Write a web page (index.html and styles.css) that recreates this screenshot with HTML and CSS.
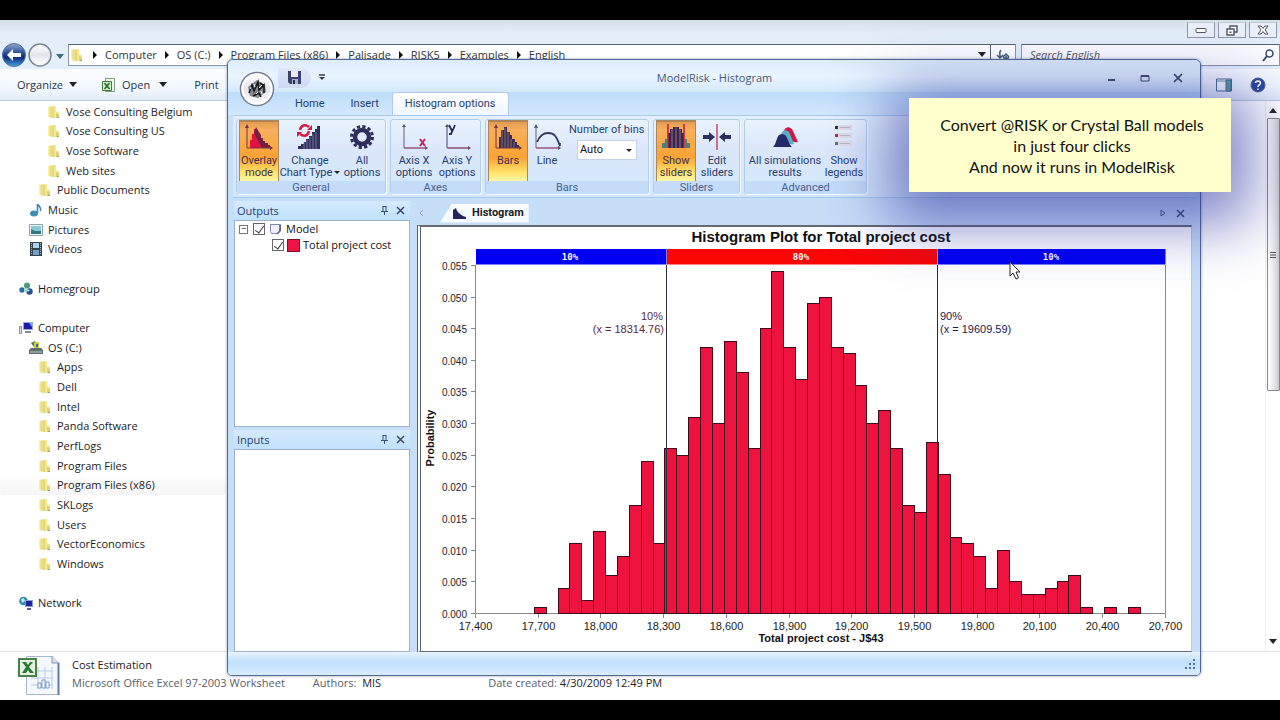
FILE: index.html
```html
<!DOCTYPE html>
<html lang="en">
<head>
<meta charset="utf-8">
<title>ModelRisk - Histogram</title>
<link rel="stylesheet" href="styles.css">
</head>
<body>
<svg class="defs" aria-hidden="true">
  <linearGradient id="gFolder" x1="0" x2="1"><stop offset="0" stop-color="#fbf6b4"/><stop offset=".55" stop-color="#e9d873"/><stop offset="1" stop-color="#f6efae"/></linearGradient>
  <linearGradient id="gOrb" x1="0" y1="0" x2="0" y2="1"><stop offset="0" stop-color="#fff"/><stop offset=".5" stop-color="#e4e4ee"/><stop offset="1" stop-color="#fff"/></linearGradient>
  <linearGradient id="gBack" x1="0" y1="0" x2="0" y2="1"><stop offset="0" stop-color="#8fa9d6"/><stop offset=".45" stop-color="#23468f"/><stop offset=".6" stop-color="#0d2a78"/><stop offset="1" stop-color="#3fa6ea"/></linearGradient>
  <symbol id="folder" viewBox="0 0 14 14"><path d="M1 2l5-1v12l-5-1z" fill="url(#gFolder)"/><path d="M5 1h4v5l3 1v6H5z" fill="#f3e894"/><path d="M6 2v11" stroke="#d6c663"/><path d="M9 8l3 1v4H9z" fill="#ddd07c"/><path d="M10 12h2v1h-2z" fill="#9aa27a"/></symbol>
  <symbol id="music" viewBox="0 0 14 14"><ellipse cx="5" cy="10.500" rx="4" ry="3" fill="#3f8fb4"/><path d="M8.500 10V1c1 2 4 3 3 7" fill="none" stroke="#3c87b6" stroke-width="1.600"/></symbol>
  <symbol id="pictures" viewBox="0 0 14 14"><path d="M.5 1.500h13v11H.5z" fill="#eef6fa" stroke="#8fa3ad"/><path d="M2 3h10v8H2z" fill="#8cc9d6"/><path d="M2 6l4 2 6 0v3H2z" fill="#2f7a80"/></symbol>
  <symbol id="videos" viewBox="0 0 14 14"><path d="M1 0h12v14H1z" fill="#34454f"/><path d="M4 1h6v5H4z" fill="#a8d3ee"/><path d="M4 8h6v5H4z" fill="#6fa1c9"/><path d="M2.500 1v12M11.500 1v12" stroke="#aab8c0" stroke-dasharray="1 1"/></symbol>
  <symbol id="homegroup" viewBox="0 0 14 14"><circle cx="3" cy="8" r="2.700" fill="#2c6aa0"/><circle cx="8" cy="3.500" r="3" fill="#4c9a7c"/><circle cx="10.500" cy="9.500" r="3.200" fill="#27508f"/><circle cx="7" cy="8" r="2" fill="#9fd9c8"/><circle cx="9.500" cy="8.500" r="1" fill="#cfe9f6"/></symbol>
  <symbol id="computer" viewBox="0 0 14 14"><path d="M.5 5.500h2v7h-2z" fill="#dde6ee" stroke="#7f90a2"/><path d="M4 1h10v8H4z" fill="#9aa6cf"/><path d="M5 2h8v6H5z" fill="#1c1ca8"/><path d="M10 2h3v4z" fill="#5fa6ff"/><path d="M6 10h6v2H6z" fill="#7d8aa0"/></symbol>
  <symbol id="drive" viewBox="0 0 14 14"><path d="M0 9l2-2h10l2 2v4H0z" fill="#5b6d6c"/><path d="M1 10h12v2H1z" fill="#8ea09a"/><path d="M2 2l4-2 2 3-3 3z" fill="#58743f"/><path d="M5 1l5 0 0 6-5 0z" fill="#c8c64b"/><path d="M7 3h2v3H7z" fill="#3f6aa8"/></symbol>
  <symbol id="network" viewBox="0 0 14 14"><circle cx="4.500" cy="5" r="4.300" fill="#2d8aa6"/><path d="M2 3l3-1 1 3-3 2z" fill="#bfe9e2"/><path d="M6 4h8v7H6z" fill="#8f9ad6"/><path d="M7 5h6v5H7z" fill="#23209c"/><path d="M8 12h4v2H8z" fill="#5a5f90"/></symbol>
  <symbol id="pin" viewBox="0 0 9 9"><path d="M2.500 0.500h4M3 .5v5M6 .5v5M1 5.500h7M4.500 5.500V9" fill="none" stroke="#3d4f78"/></symbol>
  <symbol id="cross" viewBox="0 0 9 9"><path d="M1 1l7 7M8 1L1 8" fill="none" stroke="#3d4866" stroke-width="1.500"/></symbol>
  <symbol id="excel" viewBox="0 0 14 14"><path d="M3.500.5h9v13h-9z" fill="#eef6ea" stroke="#7da07a"/><path d="M.5 3.500h9v9h-9z" fill="#dcefd6" stroke="#3f7a3c"/><path d="M2.500 5l5 6M7.500 5l-5 6" stroke="#24722a" stroke-width="1.800"/></symbol>
</svg>

<div class="screen">
<div class="letterbox"></div>
<main class="explorer">
  <header class="glass">
    <div class="caption">
      <button aria-label="Minimize"><svg width="12" height="8" viewBox="0 0 12 8"><rect x="1" y="2.500" width="10" height="4" rx="1" fill="#fff" stroke="#4f5566"/></svg></button>
      <button aria-label="Restore"><svg width="12" height="11" viewBox="0 0 12 11"><path d="M4 1h7v6H4z" fill="#fff" stroke="#4f5566" stroke-width="1.400"/><path d="M1 4h7v6H1z" fill="#fff" stroke="#4f5566" stroke-width="1.400"/><path d="M3.500 6.500h2v1.500h-2z" fill="#4f5566"/></svg></button>
      <button aria-label="Close"><svg width="12" height="10" viewBox="0 0 12 10"><path d="M1 1h3l2 2.500L8 1h3L8 5l3 4H8L6 6.500 4 9H1l3-4z" fill="#fff" stroke="#4f5566"/></svg></button>
    </div>
    <div class="address-row">
      <button class="nav" aria-label="Back"><svg width="24" height="24" viewBox="0 0 24 24"><circle cx="12" cy="12" r="11.500" fill="url(#gBack)" stroke="#5d6f95"/><path d="M5 12l6-6v4h8v4h-8v4z" fill="#fff"/></svg></button>
      <button class="nav" aria-label="Forward"><svg width="24" height="24" viewBox="0 0 24 24"><circle cx="12" cy="12" r="11" fill="url(#gOrb)" stroke="#7b8495" stroke-width="1.500"/></svg></button>
      <button class="nav recent" aria-label="Recent pages"><i class="down teal"></i></button>
      <nav class="address" aria-label="Location">
        <svg width="14" height="14"><use href="#folder"/></svg>
        <a href="#">Computer</a><a href="#">OS (C:)</a><a href="#">Program Files (x86)</a><a href="#">Palisade</a><a href="#">RISK5</a><a href="#">Examples</a><a href="#">English</a>
        <i class="down push"></i>
        <button class="refresh" aria-label="Refresh"><svg width="14" height="12" viewBox="0 0 14 12"><path d="M5 1C3 3 4 4 4 8M1 6l3 3 3-3M10 11V7M7 8l3-3 3 3M7 9h6" fill="none" stroke="#3f5d74" stroke-width="1.500"/></svg></button>
      </nav>
      <label class="search"><input type="text" placeholder="Search English" aria-label="Search English"><svg width="14" height="14" viewBox="0 0 14 14"><circle cx="8.500" cy="5.500" r="3.500" fill="#fff" stroke="#3b4a66" stroke-width="1.500"/><path d="M6 8l-4 5" stroke="#3b4a66" stroke-width="2"/></svg></label>
    </div>
    <div class="toolbar">
      <button>Organize <i class="down"></i></button>
      <button class="open"><svg width="14" height="14"><use href="#excel"/></svg>Open <i class="down"></i></button>
      <button class="print">Print</button>
      <button class="push" aria-label="Preview pane"><svg width="16" height="14" viewBox="0 0 16 14"><path d="M.5 1h15v12H.5z" fill="#fff" stroke="#4a6a88"/><path d="M1 3h14" stroke="#6d8ca6"/><path d="M10 2h5v11h-5z" fill="#5e98a8" stroke="#4a6a88"/></svg></button>
      <button aria-label="Help"><svg width="16" height="16" viewBox="0 0 16 16"><circle cx="8" cy="8" r="7" fill="#26489a" stroke="#51628c"/><path d="M5.500 6C5.500 3.500 10.500 3.500 10.500 6 10.500 8 8 7.500 8 10M8 11.500v1.500" fill="none" stroke="#fff" stroke-width="1.600"/></svg></button>
    </div>
  </header>
  <section class="files">
    <nav class="tree" aria-label="Folders">
      <a href="#" class="l3"><svg><use href="#folder"/></svg>Vose Consulting Belgium</a>
      <a href="#" class="l3"><svg><use href="#folder"/></svg>Vose Consulting US</a>
      <a href="#" class="l3"><svg><use href="#folder"/></svg>Vose Software</a>
      <a href="#" class="l3"><svg><use href="#folder"/></svg>Web sites</a>
      <a href="#" class="l2"><svg><use href="#folder"/></svg>Public Documents</a>
      <a href="#" class="l1"><svg><use href="#music"/></svg>Music</a>
      <a href="#" class="l1"><svg><use href="#pictures"/></svg>Pictures</a>
      <a href="#" class="l1"><svg><use href="#videos"/></svg>Videos</a>
      <span></span>
      <a href="#" class="l0"><svg><use href="#homegroup"/></svg>Homegroup</a>
      <span></span>
      <a href="#" class="l0"><svg><use href="#computer"/></svg>Computer</a>
      <a href="#" class="l1"><svg><use href="#drive"/></svg>OS (C:)</a>
      <a href="#" class="l2"><svg><use href="#folder"/></svg>Apps</a>
      <a href="#" class="l2"><svg><use href="#folder"/></svg>Dell</a>
      <a href="#" class="l2"><svg><use href="#folder"/></svg>Intel</a>
      <a href="#" class="l2"><svg><use href="#folder"/></svg>Panda Software</a>
      <a href="#" class="l2"><svg><use href="#folder"/></svg>PerfLogs</a>
      <a href="#" class="l2"><svg><use href="#folder"/></svg>Program Files</a>
      <a href="#" class="l2 current"><svg><use href="#folder"/></svg>Program Files (x86)</a>
      <a href="#" class="l2"><svg><use href="#folder"/></svg>SKLogs</a>
      <a href="#" class="l2"><svg><use href="#folder"/></svg>Users</a>
      <a href="#" class="l2"><svg><use href="#folder"/></svg>VectorEconomics</a>
      <a href="#" class="l2"><svg><use href="#folder"/></svg>Windows</a>
      <span></span>
      <a href="#" class="l0"><svg><use href="#network"/></svg>Network</a>
    </nav>
    <div class="scrollbar">
      <i class="up"></i>
      <div class="thumb"><svg width="6" height="8" viewBox="0 0 6 8"><path d="M0 1.500h6M0 4h6M0 6.500h6" stroke="#555"/></svg></div>
      <i class="down"></i>
    </div>
  </section>
  <footer class="details">
    <svg width="42" height="42" viewBox="0 0 42 42"><path d="M8.500 1.500h26l6 6v32h-32z" fill="#f4f8fc" stroke="#a9b8c8"/><path d="M34 1v7h7" fill="#d8e3ee" stroke="#8497ad"/><path d="M40.500 8v32" stroke="#5f7f9c" stroke-width="2"/><path d="M13 16h22M13 23h22M13 30h22M20 12v22M27 12v22M34 12v22" stroke="#b8cde6"/><path d="M20 33v-5h3v5zM24 33v-8h3v8zM28 33v-6h3v6z" fill="#fff" stroke="#7797c0"/><rect x="1" y="4" width="17" height="17" fill="#e3f1de" stroke="#49804a" stroke-width="2"/><path d="M4 7h4l2 3 2-3h3l-4 5 5 6h-4l-2-3-2 3H4l4-6z" fill="#2a7a33"/></svg>
    <div class="info">
      <strong>Cost Estimation</strong>
      <div class="meta"><span>Microsoft Office Excel 97-2003 Worksheet</span><span>Authors:&nbsp; <b>MIS</b></span><span>Date created: <b>4/30/2009 12:49 PM</b></span></div>
    </div>
  </footer>
</main>
<div class="letterbox"></div>

<section class="app" aria-label="ModelRisk - Histogram">
  <header class="titlebar">
    <div class="quick"><button aria-label="Save"><svg width="13" height="13" viewBox="0 0 13 13"><path d="M0 0h13v13H2l-2-2z" fill="#3d4170"/><path d="M3 0h7v6H3z" fill="#e6eafa"/><path d="M4 8h6v5H4z" fill="#a8b0d6"/><path d="M5 9h2v4H5z" fill="#2a2c52"/></svg></button></div>
    <button class="customize" aria-label="Customize quick access"><svg width="6" height="7" viewBox="0 0 6 7"><path d="M0 1h6" stroke="#333a4c" stroke-width="1.500"/><path d="M0 3h6L3 6z" fill="#333a4c"/></svg></button>
    <h1>ModelRisk - Histogram</h1>
    <div class="controls">
      <button aria-label="Minimize window"><svg width="10" height="10" viewBox="0 0 10 10"><path d="M1 7h7" stroke="#434b66" stroke-width="2"/></svg></button>
      <button aria-label="Maximize window"><svg width="10" height="10" viewBox="0 0 10 10"><path d="M1 3h8v5H1z" fill="none" stroke="#434b66"/><path d="M1 3h8" stroke="#434b66" stroke-width="2"/></svg></button>
      <button aria-label="Close window"><svg width="10" height="10"><use href="#cross"/></svg></button>
    </div>
  </header>
  <button class="orb" aria-label="ModelRisk menu"><svg width="36" height="36" viewBox="0 0 36 36"><circle cx="18" cy="18" r="16.500" fill="url(#gOrb)" stroke="#777c8c" stroke-width="1.500"/><circle cx="18" cy="18" r="14.500" fill="none" stroke="#fff" stroke-width="2"/><path d="M9 16l9-7 8 5 1 7-8 6-8-2z" fill="#85878c"/><path d="M10 22l3-8 2 6 4-9 1 8 5-5v8M14 25l6-3 2 4M21 12l4 3" fill="none" stroke="#17191c" stroke-width="1.600"/><path d="M15 13l1 3M20 17l3-3M17 23l2-2M11 18l1-2M22 20l1 3" stroke="#f0f0f5"/></svg></button>
  <nav class="tabs"><a href="#">Home</a><a href="#">Insert</a><a href="#" class="active">Histogram options</a><button class="help" aria-label="Ribbon help"><svg width="14" height="14" viewBox="0 0 14 14"><circle cx="7" cy="7" r="6" fill="#9fb0dd" stroke="#41528c" stroke-width="2"/></svg></button></nav>
  <div class="ribbon">
    <div class="group"><div class="tools">
      <button class="tool on w40"><svg viewBox="0 0 28 28"><path d="M5 25V17h2v-6h2V6h3v3h2v3h2v3h2v3h2v2h3v2h2v3z" fill="#e2123e"/><path d="M9 10l2-6 3 5 2 3v3h2v3h2v2h3v2h2v3h-8z" fill="#712040"/><path d="M2 3v22h25" fill="none" stroke="#7a3040"/><path d="M2 1l2 4H0zM28 25l-3-2v4z" fill="#7a3040"/></svg><span>Overlay<br>mode</span></button>
      <button class="tool w60"><svg viewBox="0 0 28 28"><path d="M2 26v-3h3v-2h3v-2h2v-3h3v-3h3V9h3V6h2V3h3v23z" fill="#31305c"/><path d="M8 26V19M11 26V17M14 26V14M17 26V11M20 26V9" stroke="#8d92b8" stroke-width=".7"/><path d="M13 4C9 1 5 2 4 7M4 11c4 3 8 2 9-3" fill="none" stroke="#d11a45" stroke-width="2.500"/><path d="M11 7h5V2zM6 9H1v5z" fill="#d11a45"/></svg><span>Change<br>Chart Type<i class="down tiny"></i></span></button>
      <button class="tool w42"><svg viewBox="0 0 28 28"><circle cx="14" cy="14" r="7" fill="none" stroke="#2d2f58" stroke-width="4.500"/><circle cx="14" cy="14" r="10.500" fill="none" stroke="#2d2f58" stroke-width="3" stroke-dasharray="3.200 2.300"/></svg><span>All<br>options</span></button>
    </div><h2>General</h2></div>
    <div class="group"><div class="tools">
      <button class="tool w42"><svg viewBox="0 0 28 28"><path d="M4 3v22h22" fill="none" stroke="#665f7e"/><path d="M4 25h22" stroke="#b34e76"/><path d="M4 1l2 3H2zM28 25l-3-2v4z" fill="#545172"/><path d="M20 16l5 7M25 16l-5 7" stroke="#c2255a" stroke-width="2"/></svg><span>Axis X<br>options</span></button>
      <button class="tool w42"><svg viewBox="0 0 28 28"><path d="M4 3v22h22" fill="none" stroke="#4a4768"/><path d="M5 25h22" stroke="#b34e76"/><path d="M4 1l2 3H2zM28 25l-3-2v4z" fill="#545172"/><path d="M6 2l3 6M12 2L8 11H6" fill="none" stroke="#272a4e" stroke-width="1.800"/></svg><span>Axis Y<br>options</span></button>
    </div><h2>Axes</h2></div>
    <div class="group"><div class="tools">
      <button class="tool on w40"><svg viewBox="0 0 28 28"><path d="M5 25V14h2V7h3V4h3v5h3v3h2v4h3v3h2v3h2v3z" fill="#3a2d58"/><path d="M8 25V7M11 25V5M14 25V9M17 25v-9M20 25v-6" stroke="#b08a60" stroke-width=".7"/><path d="M2 3v22h25" fill="none" stroke="#7a3040"/><path d="M2 1l2 4H0zM28 25l-3-2v4z" fill="#7a3040"/></svg><span>Bars</span></button>
      <button class="tool w36"><svg viewBox="0 0 28 28"><path d="M3 3v22h23" fill="none" stroke="#665f7e"/><path d="M3 25h23" stroke="#b34e76"/><path d="M3 1l2 4H1zM28 25l-3-2v4z" fill="#545172"/><path d="M4 19c3-7 7-9 11-9 6 0 8 2 12 13" fill="none" stroke="#34385c" stroke-width="1.800"/><path d="M25 20l2 4 1-4z" fill="#34385c"/></svg><span>Line</span></button>
      <label class="bins">Number of bins<span><select><option>Auto</option></select><i class="down tiny"></i></span></label>
    </div><h2>Bars</h2></div>
    <div class="group"><div class="tools">
      <button class="tool on w40"><svg viewBox="0 0 28 28"><path d="M0 25v-5h3v-4h2v9zM23 25V16h2v4h3v5z" fill="#4f7d7e"/><path d="M6 25V10h2V6h3V4h6v2h3v4h2v15z" fill="#3b2450"/><path d="M10 25V6M14 25V4M18 25V6" stroke="#a78a8a" stroke-width=".8"/><path d="M6 1v24M22 1v24" stroke="#b91c3a" stroke-width="1.500"/></svg><span>Show<br>sliders</span></button>
      <button class="tool w40"><svg viewBox="0 0 28 28"><path d="M14 1v26" stroke="#c2476a" stroke-width="1.500"/><path d="M0 12h6V9l6 5-6 5v-3H0zM28 12h-6V9l-6 5 6 5v-3h6z" fill="#2e2e5c"/></svg><span>Edit<br>sliders</span></button>
    </div><h2>Sliders</h2></div>
    <div class="group"><div class="tools">
      <button class="tool w76"><svg viewBox="0 0 28 28"><path d="M13 8c1-5 7-5 9 0l5 11c-4 1-8-1-14-11z" fill="#d31645"/><path d="M10 12c1-6 7-6 9-1l4 10c-4 1-8 0-13-9z" fill="#57b1c2"/><path d="M2 24c4-3 3-13 9-13s6 10 10 13z" fill="#252a68"/></svg><span>All simulations<br>results</span></button>
      <button class="tool w40"><svg viewBox="0 0 28 28"><path d="M6 2h16v5H6zM6 10h16v5H6zM6 18h16v5H6z" fill="#dedee6"/><path d="M5 3h3v3H5z" fill="#333"/><path d="M5 11h3v3H5z" fill="#b02f50"/><path d="M5 19h3v3H5z" fill="#4e7b70"/><path d="M10 4.500h10M10 12.500h10M10 20.500h10" stroke="#b9bac8"/></svg><span>Show<br>legends</span></button>
    </div><h2>Advanced</h2></div>
  </div>
  <div class="work">
    <aside class="panes">
      <section class="pane outputs">
        <header><h2>Outputs</h2><button aria-label="Pin outputs"><svg width="9" height="9"><use href="#pin"/></svg></button><button aria-label="Close outputs"><svg width="9" height="9"><use href="#cross"/></svg></button></header>
        <div class="list">
          <div class="node"><button class="expander" aria-label="Collapse">−</button><input type="checkbox" id="model" checked><svg width="13" height="11" viewBox="0 0 13 11"><path d="M1.500.5h10v6l-3 3h-6l-1-2z" fill="#eef0fa" stroke="#8086a8"/><path d="M11 1v6l-3 3" fill="none" stroke="#54587c" stroke-width="1.500"/></svg><label for="model">Model</label></div>
          <div class="node child"><input type="checkbox" id="cost" checked><i class="swatch"></i><label for="cost">Total project cost</label></div>
        </div>
      </section>
      <section class="pane inputs">
        <header><h2>Inputs</h2><button aria-label="Pin inputs"><svg width="9" height="9"><use href="#pin"/></svg></button><button aria-label="Close inputs"><svg width="9" height="9"><use href="#cross"/></svg></button></header>
        <div class="list"></div>
      </section>
    </aside>
    <section class="document">
      <header class="doc-tabs"><button aria-label="Previous tab"><svg width="5" height="8" viewBox="0 0 5 8"><path d="M4 1L1 4l3 3" fill="none" stroke="#8b98bb"/></svg></button>
        <a href="#"><svg width="14" height="11" viewBox="0 0 14 11"><path d="M1 11V2l3-2 1 3 3 3 3 2 3 1v2z" fill="#23245c"/></svg>Histogram</a>
        <button class="push" aria-label="Next tab"><svg width="6" height="8" viewBox="0 0 6 8"><path d="M1 1v6l4-3z" fill="none" stroke="#4c5878"/></svg></button><button aria-label="Close tab"><svg width="9" height="9"><use href="#cross"/></svg></button></header>
      <div class="plot">
        <svg id="chart" viewBox="421 228 770 422" role="img" aria-label="Histogram Plot for Total project cost">
          <text class="chart-title" x="821" y="242">Histogram Plot for Total project cost</text>
          <g id="axes"></g>
          <g id="bars"></g>
          <path class="band low" d="M476 249h190.500v15.500H476z"/><path class="band mid" d="M667 249h270.500v15.500H667z"/><path class="band low" d="M938 249h227.500v15.500H938z"/>
          <text class="band-label" x="570" y="260">10%</text><text class="band-label" x="801" y="260">80%</text><text class="band-label" x="1051" y="260">10%</text>
          <path class="marker" d="M666.500 265v349M937.500 265v349"/>
          <text class="note left" x="663" y="320">10%</text><text class="note left" x="664" y="333">(x = 18314.76)</text>
          <text class="note right" x="940" y="320">90%</text><text class="note right" x="940" y="333">(x = 19609.59)</text>
          <text class="axis-title" x="821" y="642">Total project cost - J$43</text>
          <text class="axis-title" transform="translate(434 438) rotate(-90)">Probability</text>
        </svg>
      </div>
    </section>
  </div>
  <footer class="status"><svg width="12" height="12" viewBox="0 0 12 12"><path d="M9 1h2v2H9zM9 5h2v2H9zM5 5h2v2H5zM9 9h2v2H9zM5 9h2v2H5zM1 9h2v2H1z" fill="#55719c"/></svg></footer>
</section>

<p class="callout">Convert @RISK or Crystal Ball models<br>in just four clicks<br>And now it runs in ModelRisk</p>
<svg class="cursor" width="12" height="19" viewBox="0 0 12 19"><path d="M1 1v14l3-3 3 6 2.500-1.200L7 11h4z" fill="#fff" stroke="#222"/></svg>
</div>
<script src="chart.js"></script>
</body>
</html>
```
FILE: styles.css
```css
* { box-sizing: border-box; }
body { margin: 0; background: #000; font: 11px/14px "Open Sans", "Noto Sans", sans-serif; color: #1c1c1c; }
h1, h2, p { margin: 0; font-size: inherit; font-weight: normal; }
a { color: inherit; text-decoration: none; }
button { padding: 0; border: 0; background: none; font: inherit; color: inherit; }
svg { display: block; flex: none; }
b { font-weight: normal; color: #222; }
.defs { position: absolute; width: 0; height: 0; }
.push { margin-left: auto; }
.down, .up { display: inline-block; width: 0; height: 0; border: 4px solid transparent; border-bottom-width: 0; border-top: 5px solid #222; }
.up { border-top-width: 0; border-bottom: 5px solid #222; border-top-color: transparent; }
.down.teal { border-top-color: #3b6a74; }
.down.tiny { border-width: 3px 3px 0; }

.screen { position: relative; display: flex; flex-direction: column; min-height: 100vh; overflow: hidden; }
.letterbox { flex: 0 0 20px; background: #000; }
.explorer { flex: 1; display: flex; flex-direction: column; background: #fff; }

/* Explorer chrome */
.glass { background: linear-gradient(#d3dfe6, #e3edf8 12px, #e3f0fc 50px); }
.caption { display: flex; justify-content: flex-end; gap: 3px; height: 20px; padding: 2px 3px 2px 0; }
.caption button { display: grid; place-items: center; width: 28px; border: 1px solid #8f97ab; border-top-color: #c2c8d6; background: #eaeffa; }
.address-row { display: flex; align-items: center; height: 29px; gap: 2px; padding-left: 2px; }
.nav { flex: none; }
.recent { width: 12px; text-align: center; line-height: 8px; }
.address { flex: 1; display: flex; align-items: center; height: 22px; margin-right: 3px; padding-left: 1px; background: #fff; border: 1px solid #8a97a6; border-top-color: #56616e; color: #333; }
.address a { display: flex; align-items: center; margin-left: 9px; }
.address a::before { content: ""; margin-right: 8px; border: 4px solid transparent; border-right: 0; border-left: 4px solid #111; }
.address a + a { margin-left: 8px; }
.refresh { display: grid; place-items: center; width: 25px; height: 20px; margin-left: 4px; border-left: 1px solid #56616e; }
.search { flex: 0 1 259px; display: flex; align-items: center; height: 22px; padding: 0 4px 0 8px; background: #fbfcff; border: 1px solid #8a97a6; border-top-color: #56616e; }
.search input { flex: 1; min-width: 0; padding: 0; border: 0; background: none; font: italic 11px/14px "Open Sans", sans-serif; }
.search input::placeholder { color: #555; opacity: 1; }
.toolbar { display: flex; align-items: center; height: 32px; padding: 0 14px 0 17px; background: linear-gradient(#fbfdff, #f2f8fe 60%, #e2ecf8); border-bottom: 1px solid #bfcbd6; color: #2c3548; }
.toolbar button { display: flex; align-items: center; gap: 6px; }
.toolbar .open { margin-left: 25px; }
.toolbar .open .down { margin-left: 3px; }
.toolbar .print { margin-left: 27px; }
.toolbar .push { margin-left: auto; margin-right: 18px; }

.files { flex: 1; display: flex; justify-content: space-between; }
.tree { display: grid; grid-auto-rows: 1fr; width: 226px; padding: 1px 0 38px; }
.tree a { display: flex; align-items: center; gap: 5px; }
.tree svg { width: 14px; height: 14px; }
.l0 { padding-left: 19px; }
.l1 { padding-left: 29px; }
.l2 { padding-left: 38px; }
.l3 { padding-left: 47px; }
.current { background: linear-gradient(#fefefe, #f5f5f5); border-radius: 3px; }
.scrollbar { display: flex; flex-direction: column; align-items: center; width: 15px; padding: 7px 0; border-left: 1px solid #eee; }
.thumb { display: grid; place-items: center; width: 13px; height: 51%; margin: 5px 0 auto; background: linear-gradient(90deg, #fff, #e6e6e9 60%, #c9c9cd); border: 1px solid #85878d; border-radius: 1px; }
.details { display: flex; align-items: center; gap: 12px; height: 49px; padding: 0 18px; border-top: 1px solid #dbe6ee; color: #5a6068; }
.info { flex: 1; display: grid; gap: 4px; padding-bottom: 4px; }
.info strong { font-weight: normal; color: #222; }
.meta { display: flex; }
.meta span + span { margin-left: 28px; }
.meta span + span + span { margin-left: 107px; }

/* ModelRisk window */
.app { position: absolute; inset: 59px 79px 44px 227px; display: flex; flex-direction: column; background: #c6def8; border: 1px solid #4f6990; border-radius: 6px 6px 5px 5px; overflow: hidden; box-shadow: 0 0 3px rgba(40, 60, 100, .5); color: #27406e; }
.titlebar { position: relative; display: flex; align-items: center; height: 32px; padding: 3px 14px 0 50px; background: linear-gradient(#dcecfb, #e9f5ff 50%, #d4e8fb); }
.quick { display: grid; place-items: center; width: 33px; height: 20px; border-radius: 0 10px 10px 0; background: linear-gradient(#dfe7f8, #ced9f2); }
.customize { margin-left: 8px; }
.titlebar h1 { flex: 1; text-align: center; color: #4a5878; }
.titlebar .controls { display: flex; gap: 23px; padding: 0 3px; }
.orb { position: absolute; left: 11px; top: 11px; z-index: 1; }
.tabs { display: flex; align-items: stretch; height: 23px; padding-left: 54px; background: linear-gradient(#bedcf9, #d2e8fd); font-family: Roboto, sans-serif; }
.tabs a { display: flex; align-items: center; padding: 0 13px; }
.tabs .active { margin: 0; padding: 0 12px; background: linear-gradient(#fff, #eef6ff); border: 1px solid #aecbeb; border-bottom: 0; border-radius: 3px 3px 0 0; }
.help { margin: 2px 10px 0 auto; }
.ribbon { display: flex; gap: 4px; height: 83px; margin: 0 5px; padding: 3px 9px 3px 3px; background: linear-gradient(#e3effc, #d3e5f9); border: solid #a9c8ea; border-width: 1px 0; font-family: Roboto, sans-serif; }
.group { display: flex; flex-direction: column; border: 1px solid #b2cdea; border-radius: 3px; background: linear-gradient(#e9f3fe, #dbe7fa 40%, #d3e8fc); box-shadow: 1px 1px 0 #f4faff; }
.tools { flex: 1; display: flex; justify-content: center; padding: 0 2px; gap: 1px; }
.group h2 { height: 14px; line-height: 13px; text-align: center; background: #c4dcf7; color: #4a6290; }
.tool { display: flex; flex-direction: column; align-items: center; height: 61px; padding-top: 3px; line-height: 12px; white-space: nowrap; }
.tool svg { width: 28px; height: 28px; margin-bottom: 4px; }
.tool .down { margin: 0 0 2px 2px; }
.on { background: linear-gradient(#e39a50, #f7b05c 8px, #fca233 36px, #ffe268 50px, #fff6a8); border: solid #a9865c; border-width: 2px 1px 0; padding-top: 1px; color: #433050; }
.w36 { width: 36px; } .w40 { width: 40px; } .w42 { width: 42px; } .w60 { width: 60px; } .w76 { width: 76px; }
.bins { display: flex; flex-direction: column; gap: 3px; width: 80px; padding: 3px 0 0 3px; white-space: nowrap; }
.bins span { position: relative; margin: 0 9px 0 8px; background: #fff; border: 1px solid #c3d3ea; }
.bins select { width: 100%; height: 18px; padding: 0 2px; border: 0; background: none; appearance: none; font: inherit; color: #111; }
.bins .down { position: absolute; right: 4px; top: 8px; }

.work { flex: 1; display: flex; gap: 7px; margin: 0 8px 0 6px; padding-top: 3px; }
.panes { flex: 0 0 176px; display: flex; flex-direction: column; gap: 3px; }
.pane { display: flex; flex-direction: column; }
.outputs { flex: 226; }
.inputs { flex: 222; }
.pane header { display: flex; align-items: center; gap: 7px; height: 19px; padding: 0 5px 0 3px; background: linear-gradient(#d6eafd, #bfe0fc); }
.pane h2 { flex: 1; }
.list { flex: 1; background: #fff; border: 1px solid #9cb1cc; color: #111; }
.node { display: flex; align-items: center; height: 16px; padding-left: 4px; gap: 4px; }
.child { padding-left: 37px; gap: 3px; }
.expander { width: 9px; height: 9px; margin-right: 1px; border: 1px solid #777; line-height: 6px; font-size: 9px; }
.node input { position: relative; appearance: none; width: 12px; height: 12px; margin: 0; border: 1px solid #62656c; background: #fff; }
.node input:checked::after { content: ""; position: absolute; left: 3px; top: 0; width: 4px; height: 8px; border: solid #333; border-width: 0 1px 1px 0; transform: rotate(35deg); }
.swatch { width: 13px; height: 13px; background: #ee1444; border: 1px solid #7c1028; }

.document { flex: 1; display: flex; flex-direction: column; min-width: 0; }
.doc-tabs { display: flex; align-items: center; height: 24px; padding: 0 7px 0 2px; }
.doc-tabs .push { margin-right: 10px; }
.doc-tabs a { display: flex; align-items: center; gap: 6px; height: 19px; margin-left: 16px; padding: 0 5px 0 12px; background: #f6fbff; clip-path: polygon(12px 0, 100% 0, 100% 100%, 0 100%); font-weight: bold; font-family: Roboto, sans-serif; color: #222; }
.plot { flex: 1; min-height: 0; display: grid; background: #fff; border: 1px solid #666a72; border-top-width: 2px; border-left: 4px double #5c626e; border-right-color: #b9cbe8; }
.plot svg { width: 100%; height: 100%; min-height: 0; }
.status { display: flex; justify-content: flex-end; align-items: center; height: 23px; padding-right: 4px; background: linear-gradient(#e6f3ff, #bfe0fb 45%, #d9edff); }

/* Chart */
#chart { font-family: "Liberation Sans", Arial, sans-serif; }
#chart text { font-size: 11px; fill: #222; text-anchor: middle; }
#chart .chart-title { font-size: 15px; font-weight: bold; fill: #111; }
#chart .axis-title { font-weight: bold; font-size: 11px; fill: #111; }
#chart .tick-y { text-anchor: end; font-size: 10px; }
#chart .band-label { font: bold 9px "DejaVu Sans Mono", monospace; fill: #fff; }
#chart .note.left { text-anchor: end; fill: #5a2a3c; }
#chart .note.right { text-anchor: start; fill: #20204c; }
.axis { fill: none; stroke: #888; }
.bar { fill: #ee123f; stroke: #3c0a18; }
.low { fill: #0000f4; }
.mid { fill: #fb0505; }
.marker { stroke: #33283c; }

.callout { position: absolute; top: 98px; right: 49px; width: 322px; padding: 16px 0 15px 4px; background: #ffffcd; box-shadow: 0 12px 60px 20px rgba(40, 50, 160, .6); font: 16px/21px Lato, "Open Sans", sans-serif; text-align: center; color: #111; }
.cursor { position: absolute; left: 1009px; top: 261px; }
```
FILE: chart.js
```js
const NS = 'http://www.w3.org/2000/svg';
const left = 475.5, base = 613.5, perThousandth = 6.33;
const firstBin = 534.3, binWidth = 11.88;

// Probabilities in thousandths, one per bin
const bins = [1, 0, 4, 11, 2, 13, 6, 9, 17, 24, 11, 26, 25, 31, 42, 30, 43, 38, 26, 45, 54, 42, 37, 49, 50, 42, 41,
  36, 30, 32, 26, 17, 16, 27, 22, 12, 11, 9, 4, 10, 5, 3, 3, 4, 5, 6, 1, 0, 1, 0, 1];

function add(parent, name, attrs, text) {
  const node = document.createElementNS(NS, name);
  for (const key in attrs) node.setAttribute(key, attrs[key]);
  if (text) node.textContent = text;
  document.getElementById(parent).append(node);
}
const snap = v => Math.floor(v) + 0.5;

bins.forEach((v, i) => {
  if (!v) return;
  const x = snap(firstBin + i * binWidth), next = snap(firstBin + (i + 1) * binWidth);
  const y = snap(base - v * perThousandth);
  add('bars', 'rect', { class: 'bar', x, y, width: next - x, height: base - y });
});

let ticks = 'M475.500 265V613.500H1165.500V265';
for (let v = 0; v <= 55; v += 5) {
  const y = snap(base - v * perThousandth);
  ticks += `M471 ${y}H475`;
  add('axes', 'text', { class: 'tick-y', x: 467, y: y + 4 }, (v / 1000).toFixed(3));
}
for (let i = 0; i <= 11; i++) {
  const x = snap(left + i * 62.7);
  ticks += `M${x} 614V618`;
  add('axes', 'text', { x, y: 630 }, (17400 + i * 300).toLocaleString('en-US'));
}
add('axes', 'path', { class: 'axis', d: ticks });
```
